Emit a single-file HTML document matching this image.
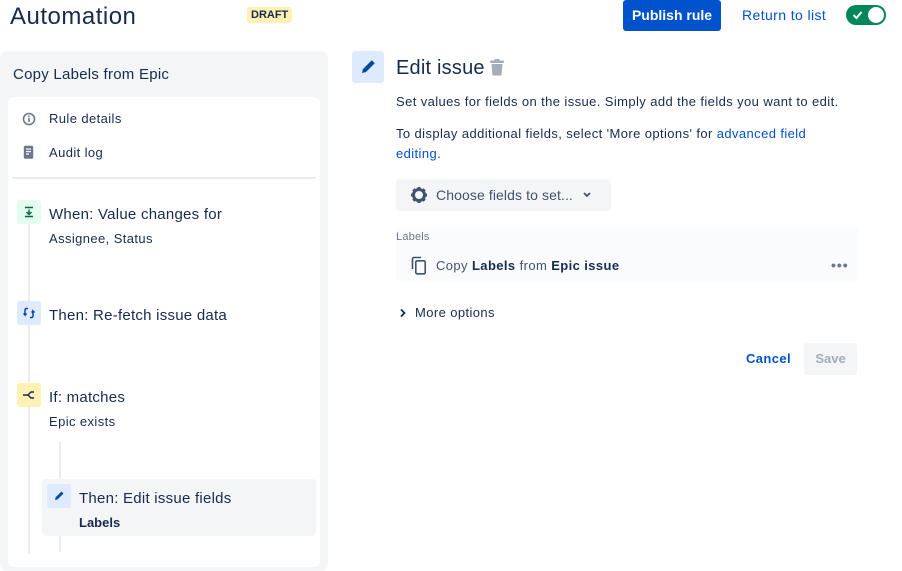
<!DOCTYPE html>
<html><head><style>
*{margin:0;padding:0;box-sizing:border-box}
body{width:902px;height:550px;overflow:hidden;background:#fff;font-family:"Liberation Sans",sans-serif;color:#172b4d;position:relative}
.a{position:absolute;white-space:nowrap}
.s{letter-spacing:.4px}
.m{letter-spacing:.25px}
.ic{position:absolute;width:24px;height:24px;border-radius:3px;display:flex;align-items:center;justify-content:center}
</style></head><body>
<div class="a" style="left:10px;top:3px;font-size:24px;color:#172b4d;letter-spacing:.5px">Automation</div>
<div class="a" style="left:247px;top:7px;background:#fff0b3;border-radius:3px;padding:2px 4px;font-size:11px;font-weight:bold;color:#172b4d">DRAFT</div>
<div class="a" style="left:623px;top:0;width:98px;height:31px;background:#0052cc;border-radius:3px;color:#fff;font-size:14px;font-weight:bold;text-align:center;line-height:31px">Publish rule</div>
<div class="a s" style="left:742px;top:7px;font-size:14px;color:#0052cc">Return to list</div>
<div class="a" style="left:846px;top:5px;width:40px;height:20px;background:#00875a;border-radius:10px">
<svg style="position:absolute;left:6px;top:5px" width="11" height="10" viewBox="0 0 11 10"><path d="M1.5 5l3 3 5-6" stroke="#fff" stroke-width="2" fill="none"/></svg>
<div style="position:absolute;right:2px;top:2px;width:16px;height:16px;border-radius:50%;background:#fff"></div></div>

<div class="a" style="left:0;top:51px;width:328px;height:520px;background:#f4f5f7;border-radius:8px"></div>
<div class="a m" style="left:13px;top:66px;font-size:15px">Copy Labels from Epic</div>
<div class="a" style="left:8px;top:97px;width:312px;height:470px;background:#fff;border-radius:6px"></div>
<svg class="a" style="left:22px;top:112px" width="14" height="14" viewBox="0 0 14 14"><circle cx="7" cy="7" r="5.5" stroke="#6b778c" stroke-width="1.6" fill="none"/><rect x="6.2" y="6" width="1.6" height="4" fill="#6b778c"/><rect x="6.2" y="3.6" width="1.6" height="1.6" fill="#6b778c"/></svg>
<div class="a s" style="left:49px;top:111px;font-size:13px">Rule details</div>
<svg class="a" style="left:23px;top:145px" width="11" height="15" viewBox="0 0 11 15"><rect x="0.8" y="0.8" width="9.4" height="13" rx="1.5" fill="#6b778c"/><rect x="3" y="3.5" width="5" height="1.2" fill="#fff"/><rect x="3" y="6" width="5" height="1.2" fill="#fff"/><rect x="3" y="8.5" width="3" height="1.2" fill="#fff"/></svg>
<div class="a s" style="left:49px;top:145px;font-size:13px">Audit log</div>
<div class="a" style="left:12px;top:177px;width:304px;height:2px;background:#ebecf0"></div>

<div class="a" style="left:28px;top:224px;width:2px;height:330px;background:#ebecf0"></div>
<div class="a" style="left:59px;top:442px;width:2px;height:110px;background:#ebecf0"></div>

<div class="ic" style="left:17px;top:200px;background:#e3fcef"><svg width="12" height="12" viewBox="0 0 12 12"><path d="M2 1.5h8M6 3.5v5M3.5 6l2.5 2.5L8.5 6M2 10.5h8" stroke="#006644" stroke-width="1.4" fill="none"/></svg></div>
<div class="a m" style="left:49px;top:206px;font-size:15px">When: Value changes for</div>
<div class="a s" style="left:49px;top:231px;font-size:13px">Assignee, Status</div>

<div class="ic" style="left:17px;top:301px;background:#deebff"><svg width="14" height="14" viewBox="0 0 14 14"><path d="M6 2.5H4.5a1.5 1.5 0 0 0-1.5 1.5v5l-1.5-1.5M3 9l1.5-1.5" stroke="#0747a6" stroke-width="1.5" fill="none"/><path d="M8 11.5h1.5a1.5 1.5 0 0 0 1.5-1.5V5l1.5 1.5M11 5L9.5 6.5" stroke="#0747a6" stroke-width="1.5" fill="none"/></svg></div>
<div class="a m" style="left:49px;top:307px;font-size:15px">Then: Re-fetch issue data</div>

<div class="ic" style="left:17px;top:383px;background:#fff0b3"><svg width="14" height="12" viewBox="0 0 14 12"><path d="M1 6h5M6 6l3-3h3M6 6l3 3h3" stroke="#172b4d" stroke-width="1.4" fill="none"/></svg></div>
<div class="a m" style="left:49px;top:389px;font-size:15px">If: matches</div>
<div class="a s" style="left:49px;top:414px;font-size:13px">Epic exists</div>

<div class="a" style="left:42px;top:479px;width:274px;height:57px;background:#f4f5f7;border-radius:4px"></div>
<div class="ic" style="left:47px;top:484px;background:#deebff"><svg width="12" height="12" viewBox="0 0 12 12"><path d="M2 10l.6-2.6L8.5 1.5l2 2L4.6 9.4z" fill="#0747a6"/></svg></div>
<div class="a m" style="left:79px;top:490px;font-size:15px">Then: Edit issue fields</div>
<div class="a" style="left:79px;top:515px;font-size:13px;font-weight:bold">Labels</div>

<div class="ic" style="left:352px;top:51px;width:32px;height:32px;background:#deebff"><svg width="18" height="18" viewBox="0 0 12 12"><path d="M2 10l.6-2.6L8.5 1.5l2 2L4.6 9.4z" fill="#0747a6"/></svg></div>
<div class="a" style="left:396px;top:57px;font-size:20px;letter-spacing:.2px">Edit issue</div>
<svg class="a" style="left:489px;top:59px" width="16" height="17" viewBox="0 0 16 17"><rect x="1" y="1.5" width="14" height="2.5" rx="1" fill="#a5adba"/><rect x="5.5" y="0" width="5" height="2" fill="#a5adba"/><path d="M2.5 5h11l-1 11.5h-9z" fill="#a5adba"/></svg>
<div class="a s" style="left:396px;top:94px;font-size:13px">Set values for fields on the issue. Simply add the fields you want to edit.</div>
<div class="a s" style="left:396px;top:126px;font-size:13px">To display additional fields, select 'More options' for <span style="color:#0052cc">advanced field</span></div>
<div class="a s" style="left:396px;top:146px;font-size:13px"><span style="color:#0052cc">editing</span>.</div>
<div class="a" style="left:396px;top:179px;width:215px;height:32px;background:#f4f5f7;border-radius:3px"></div>
<svg class="a" style="left:410px;top:186px" width="18" height="18" viewBox="0 0 18 18"><circle cx="9" cy="9" r="5.5" fill="none" stroke="#42526e" stroke-width="3"/><g stroke="#42526e" stroke-width="3"><path d="M9 1v3M9 14v3M1 9h3M14 9h3M3.3 3.3l2.1 2.1M12.6 12.6l2.1 2.1M3.3 14.7l2.1-2.1M12.6 5.4l2.1-2.1"/></g></svg>
<div class="a" style="left:436px;top:187px;font-size:14px;color:#42526e;letter-spacing:.1px">Choose fields to set...</div>
<svg class="a" style="left:582px;top:191px" width="10" height="8" viewBox="0 0 10 8"><path d="M2 2l3 3 3-3" stroke="#42526e" stroke-width="1.8" fill="none"/></svg>
<div class="a" style="left:396px;top:227px;width:462px;height:54px;background:#fafbfc"></div>
<div class="a" style="left:396px;top:231px;font-size:11px;color:#6b778c;letter-spacing:.2px">Labels</div>
<svg class="a" style="left:411px;top:256px" width="16" height="19" viewBox="0 0 16 19"><path d="M10 1.5H3a1.5 1.5 0 0 0-1.5 1.5v10" stroke="#42526e" stroke-width="1.6" fill="none"/><rect x="4.8" y="4.8" width="9.4" height="13" rx="1.3" stroke="#42526e" stroke-width="1.6" fill="none"/></svg>
<div class="a s" style="left:436px;top:258px;font-size:13px;color:#42526e">Copy <b style="color:#172b4d">Labels</b> from <b style="color:#172b4d">Epic issue</b></div>
<div class="a" style="left:831px;top:257px;font-size:14px;color:#6b778c;letter-spacing:1px;font-weight:bold">•••</div>
<svg class="a" style="left:399px;top:308px" width="8" height="10" viewBox="0 0 8 10"><path d="M2 1.5l3.5 3.5L2 8.5" stroke="#172b4d" stroke-width="1.8" fill="none"/></svg>
<div class="a s" style="left:415px;top:305px;font-size:13px">More options</div>
<div class="a s" style="left:746px;top:351px;font-size:13px;color:#0052cc;font-weight:bold">Cancel</div>
<div class="a" style="left:804px;top:343px;width:53px;height:32px;background:#f4f5f7;border-radius:3px;color:#a5adba;font-size:13px;font-weight:bold;text-align:center;line-height:32px">Save</div>
</body></html>
